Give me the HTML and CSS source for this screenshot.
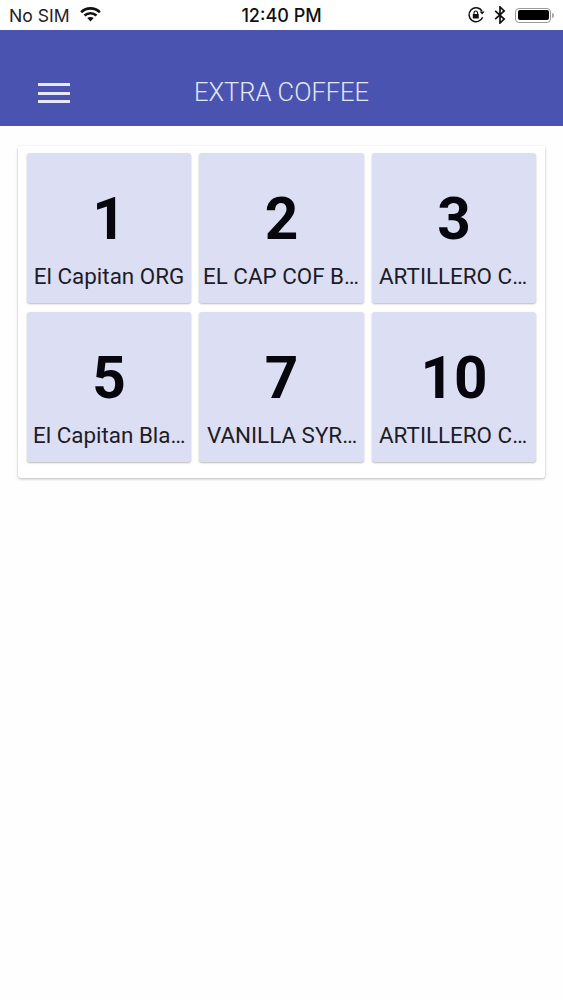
FILE: index.html
```html
<!DOCTYPE html>
<html lang="en">
<head>
<meta charset="utf-8">
<title>Extra Coffee</title>
<link rel="stylesheet" href="styles.css">
</head>
<body>
<div class="status">
  <div class="status-left">
    <span>No SIM</span>
    <svg class="wifi" viewBox="0 0 22 16" width="21" height="15"><path d="M1 5.5C6.8.2 15.2.2 21 5.5" fill="none" stroke="#111" stroke-width="2.8"/><path d="M4.6 9.1c3.7-3.2 9.1-3.2 12.8 0" fill="none" stroke="#111" stroke-width="2.8"/><path d="M7.6 11.6c2-1.4 4.8-1.4 6.8 0L11 15.4z" fill="#111"/></svg>
  </div>
  <div class="status-time">12:40 PM</div>
  <div class="status-right">
    <svg viewBox="0 0 18 18" width="18" height="18"><path d="M15.6 11.2A7 7 0 1 1 15 5" fill="none" stroke="#111" stroke-width="1.5"/><path d="M12.6 5.6h5l-2.5 3z" fill="#111"/><rect x="5.8" y="8" width="6" height="4.6" rx=".6" fill="#111"/><path d="M7 8V6.8a1.8 1.8 0 0 1 3.6 0V8" fill="none" stroke="#111" stroke-width="1.1"/></svg>
    <svg class="bt" viewBox="0 0 12 18" width="12" height="18"><path d="M1.2 4.8l9 8.2L6 17V1l4.2 4-9 8.2" fill="none" stroke="#111" stroke-width="1.7"/></svg>
    <div class="battery"><div class="battery-fill"></div></div>
    <div class="battery-cap"></div>
  </div>
</div>
<header class="toolbar">
  <div class="menu"><span></span><span></span><span></span></div>
  <div class="title">EXTRA COFFEE</div>
</header>
<main class="content">
  <section class="card">
    <div class="grid">
      <div class="tile"><div class="num">1</div><div class="label">El Capitan ORG</div></div>
      <div class="tile"><div class="num">2</div><div class="label inset-4">EL CAP COF BLEND</div></div>
      <div class="tile"><div class="num">3</div><div class="label inset-7">ARTILLERO COFFEE</div></div>
      <div class="tile"><div class="num">5</div><div class="label inset-6">El Capitan Black Bean</div></div>
      <div class="tile"><div class="num">7</div><div class="label inset-8">VANILLA SYRUP EXTRA</div></div>
      <div class="tile"><div class="num">10</div><div class="label inset-7">ARTILLERO COFFEE</div></div>
    </div>
  </section>
</main>
</body>
</html>
```
FILE: styles.css
```css
html, body { margin: 0; padding: 0; background: #fefefe; }
body { font-family: Inter, Roboto, sans-serif; height: 1000px; overflow: hidden; }

.status { position: relative; height: 30px; background: #fff; display: flex; align-items: center; justify-content: space-between; padding: 0 9px 0 9px; box-sizing: border-box; font-size: 17.6px; color: #222; }
.status-left { display: flex; align-items: center; gap: 10px; }
.wifi { margin-top: -1px; }
.status-time { position: absolute; left: 0; right: 0; text-align: center; font-weight: 500; color: #111; font-size: 18px; }
.status-right { display: flex; align-items: center; }
.status-right .bt { margin: 0 9px 0 9px; }
.battery { border: 1.5px solid #999; border-radius: 4px; padding: 1.5px; box-sizing: content-box; width: 31px; height: 10px; }
.battery-fill { width: 100%; height: 100%; background: #000; border-radius: 2px; }
.battery-cap { width: 2px; height: 5px; background: #aaa; border-radius: 0 2px 2px 0; margin-left: 1px; }

.toolbar { height: 96px; background: #4a54b0; position: relative; color: #e2e6fb; }
.menu { position: absolute; left: 38px; top: 53px; width: 32px; display: flex; flex-direction: column; gap: 5.5px; }
.menu span { display: block; height: 3px; background: #e6e9fb; }
.title { position: absolute; left: 0; right: 0; top: 46px; text-align: center; font-family: Roboto, sans-serif; font-size: 25.5px; line-height: 32px; font-weight: 300; }

.content { padding: 20px 18px 0 18px; }
.card { width: 527px; box-sizing: border-box; background: #fff; border-radius: 3px; padding: 7px 9px 16px 9px; box-shadow: 0 1px 3px rgba(0,0,0,.28); }
.grid { display: grid; grid-template-columns: 164px 165px 164px; grid-auto-rows: 150px; column-gap: 8px; row-gap: 9px; }
.tile { background: #dcdff3; border-radius: 3px; box-shadow: 0 1px 2px rgba(0,0,0,.28); display: flex; flex-direction: column; align-items: center; min-width: 0; font-family: Roboto, sans-serif; }
.num { font-size: 58.5px; font-weight: 700; color: #06060c; line-height: 70px; margin-top: 31px; }
.label { width: 100%; box-sizing: border-box; padding: 0 3px; margin-top: 8px; font-size: 22.4px; line-height: 28px; color: #1c1c28; text-align: center; white-space: nowrap; overflow: hidden; text-overflow: ellipsis; }
.inset-4 { padding-left: 4px; text-align: left; }
.inset-6 { padding-left: 6px; text-align: left; }
.inset-7 { padding-left: 7px; text-align: left; }
.inset-8 { padding-left: 8px; text-align: left; }
```
